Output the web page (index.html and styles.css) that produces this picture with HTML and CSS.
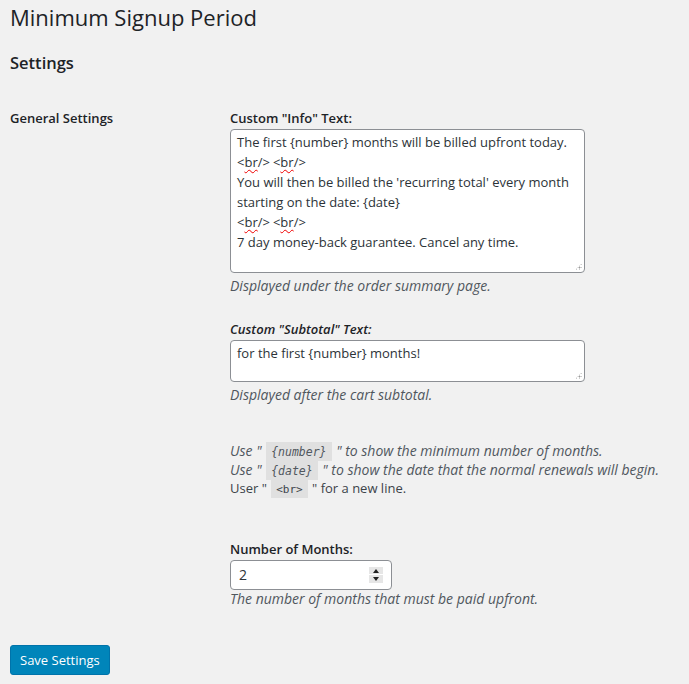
FILE: index.html
```html
<!DOCTYPE html>
<html>
<head>
<meta charset="utf-8">
<link rel="stylesheet" href="styles.css">
</head>
<body>
<div class="wrap">
  <h1 class="title">Minimum Signup Period</h1>
  <h2 class="section">Settings</h2>
  <div class="row">
    <div class="th">General Settings</div>
    <div class="td">
      <div class="field">
        <label class="lbl">Custom "Info" Text:</label>
        <div class="ta ta-big"><div class="ta-text">The first {number} months will be billed upfront today.<br><span class="sp">&lt;<u>br</u>/&gt;</span><span class="sp">&lt;<u>br</u>/&gt;</span><br>You will then be billed the 'recurring total' every month starting on the date: {date}<br><span class="sp">&lt;<u>br</u>/&gt;</span><span class="sp">&lt;<u>br</u>/&gt;</span><br>7 day money-back guarantee. Cancel any time.</div><span class="grip"></span></div>
        <p class="desc">Displayed under the order summary page.</p>
      </div>
      <div class="field">
        <label class="lbl lbl-i">Custom "Subtotal" Text:</label>
        <div class="ta ta-small"><div class="ta-text">for the first {number} months!</div><span class="grip"></span></div>
        <p class="desc">Displayed after the cart subtotal.</p>
      </div>
      <div class="help">
        <div class="hl hl-it"><em>Use " <code><em>{number}</em></code> " to show the minimum number of months.</em></div>
        <div class="hl hl-it"><em>Use " <code><em>{date}</em></code> " to show the date that the normal renewals will begin.</em></div>
        <div class="hl hl-plain">User " <code>&lt;br&gt;</code> " for a new line.</div>
      </div>
      <div class="field field-num">
        <label class="lbl">Number of Months:</label>
        <div class="num"><span class="num-val">2</span><span class="spin"><span class="up"></span><span class="down"></span></span></div>
        <p class="desc desc-num">The number of months that must be paid upfront.</p>
      </div>
    </div>
  </div>
  <div class="actions"><button class="btn">Save Settings</button></div>
</div>
</body>
</html>
```
FILE: styles.css
```css
html, body { margin: 0; padding: 0; background: #f1f1f1; }
body {
  font-family: "Open Sans", "Noto Sans", sans-serif;
  font-size: 13px;
  color: #3c434a;
}
.wrap { padding: 0 10px; width: 669px; height: 684px; box-sizing: border-box; overflow: hidden; }
.title {
  margin: 0;
  padding: 3px 0 0;
  font-size: 22px;
  font-weight: 400;
  line-height: 29px;
  color: #1d2327;
}
.section {
  margin: 21px 0 0;
  font-size: 16.5px;
  font-weight: 600;
  line-height: 20px;
  color: #1d2327;
}
.row { display: flex; margin-top: 36px; }
.th {
  width: 220px;
  flex: none;
  font-weight: 600;
  font-size: 13px;
  line-height: 18px;
  color: #1d2327;
}
.td { flex: 1; }
.field { display: flex; flex-direction: column; align-items: flex-start; }
.lbl { font-weight: 600; font-size: 13px; line-height: 18px; color: #1d2327; height: 20px; }
.lbl-i { font-style: italic; }
.ta {
  position: relative;
  width: 355px;
  box-sizing: border-box;
  background: #fff;
  border: 1px solid #8c8f94;
  border-radius: 4px;
  padding: 2px 6px;
  font-size: 13px;
  line-height: 20px;
  color: #2c3338;
}
.ta-big { height: 144px; }
.ta-small { height: 42px; }
.sp { margin-right: 3px; }
.sp u { text-decoration: underline wavy #e00; text-decoration-thickness: 1px; text-underline-offset: 2px; }
.grip {
  position: absolute;
  right: 2px; bottom: 2px;
  width: 7px; height: 7px;
  background:
    radial-gradient(circle, #999 0.9px, transparent 1.1px) 0 0 / 3px 3px;
  clip-path: polygon(100% 0, 100% 100%, 0 100%);
}
.desc {
  margin: 4px 0 0;
  font-style: italic;
  font-size: 14px;
  line-height: 18px;
  color: #50575e;
}
.desc-num { margin-top: 0; }
.field + .field { margin-top: 25px; }
.help { margin-top: 38px; color: #50575e; font-size: 13px; }
.hl { line-height: 18.5px; height: 18.5px; white-space: nowrap; }
.hl-it { font-size: 14px; }
.hl-plain { color: #3c434a; }
code {
  font-family: "DejaVu Sans Mono", monospace;
  font-size: 11px;
  line-height: 1;
  background: rgba(0,0,0,0.07);
  padding: 3px 5px 2px;
  margin: 0 1px;
}
.hl-it code { font-size: 11.5px; }
.help + .field { margin-top: 42px; }
.num {
  position: relative;
  width: 162px;
  height: 30px;
  box-sizing: border-box;
  background: #fff;
  border: 1px solid #8c8f94;
  border-radius: 4px;
  padding: 0 8px;
  display: flex;
  align-items: center;
  justify-content: space-between;
  font-size: 14px;
  color: #2c3338;
}
.spin {
  width: 14px; height: 16px;
  display: flex; flex-direction: column;
  background: #e6e6e6;
}
.spin span { flex: 1; position: relative; }
.spin .up::after, .spin .down::after {
  content: ""; position: absolute; left: 4px; width: 0; height: 0;
  border-left: 3px solid transparent; border-right: 3px solid transparent;
}
.spin .up { border-bottom: 1px solid #fff; }
.spin .up::after { top: 2px; border-bottom: 4px solid #222; }
.spin .down::after { top: 2px; border-top: 4px solid #222; }
.actions { margin-top: 37px; }
.btn {
  font-family: inherit;
  font-size: 13px;
  background: #0085ba;
  color: #fff;
  border: 1px solid #0073aa;
  border-radius: 3px;
  height: 30px;
  padding: 0 9px;
  line-height: 28px;
}
```
